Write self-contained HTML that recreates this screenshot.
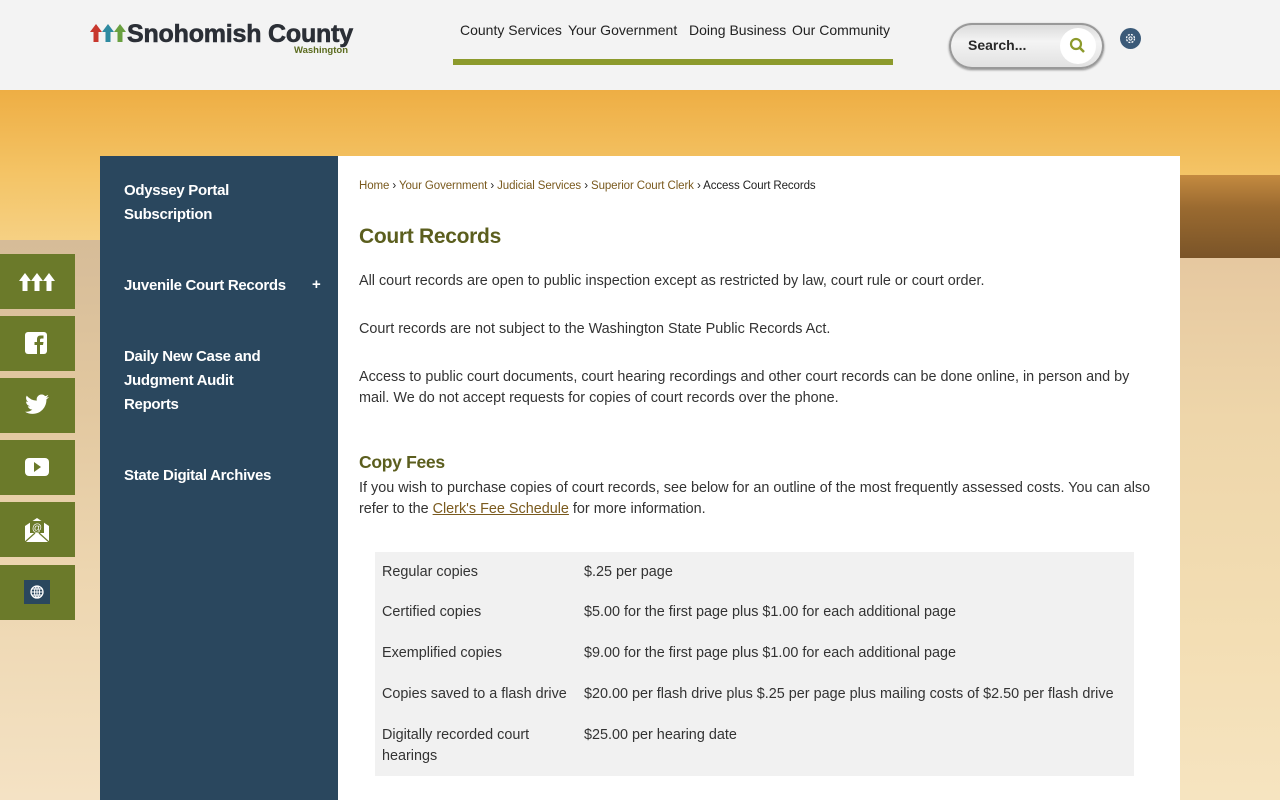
<!DOCTYPE html>
<html><head><meta charset="utf-8"><style>
*{margin:0;padding:0;box-sizing:border-box}
body{width:1280px;height:800px;overflow:hidden;font-family:"Liberation Sans",sans-serif;position:relative;
background:linear-gradient(180deg,#f0b850 90px,#f5c872 200px,#f3d59c 260px,#f1dcb0 400px,#f4e2c0 600px,#f6e6ca 800px)}
.bgtop{position:absolute;left:0;top:90px;width:1280px;height:170px;background:linear-gradient(180deg,#eeae44,#f4c466 50%,#f6d48c)}
.trees{position:absolute;left:1180px;top:175px;width:100px;height:83px;background:linear-gradient(180deg,#c48a40,#9a6a30 40%,#7a5428)}
.water{position:absolute;left:1180px;top:258px;width:100px;height:542px;background:linear-gradient(180deg,#e6c8a0,#eed6aa 30%,#f3deb4 70%,#f6e4c0)}
.lw{position:absolute;left:0;top:240px;width:100px;height:560px;background:linear-gradient(180deg,#d6bc98,#e2c8a0 30%,#edd6b0 60%,#f4e2c4)}
header{position:absolute;left:0;top:0;width:1280px;height:90px;background:#f3f3f3}
.logo{position:absolute;left:90px;top:20px}
.logo .n{font-weight:bold;font-size:25px;color:#2b2f36;letter-spacing:-0.2px;position:absolute;left:37px;top:0;white-space:nowrap;-webkit-text-stroke:0.6px #2b2f36}
.logo .w{position:absolute;left:204px;top:25px;font-size:9.5px;font-weight:bold;color:#5b6b1e}
nav{position:absolute;left:453px;top:22px;width:440px;font-size:14px;color:#222}
nav span{position:absolute;top:0;white-space:nowrap}
.navbar{position:absolute;left:453px;top:59px;width:440px;height:6px;background:#8c9a2c}
.search{position:absolute;left:949px;top:23px;width:155px;height:46px;border-radius:23px;background:linear-gradient(180deg,#d8d8d8,#f4f4f4 40%,#e0e0e0);box-shadow:0 0 0 2px #999 inset,0 1px 2px #888}
.search span{position:absolute;left:19px;top:14px;font-size:14px;font-weight:bold;color:#2a2a2a}
.search .b{position:absolute;left:111px;top:5px;width:36px;height:36px;border-radius:50%;background:#fff}
.gear{position:absolute;left:1120px;top:28px;width:21px;height:21px;border-radius:50%;background:#3b5a78}
.side{position:absolute;left:100px;top:156px;width:238px;height:644px;background:#2a475e}
.side div{position:absolute;left:24px;color:#fff;font-weight:bold;font-size:15px;line-height:24px;letter-spacing:-0.3px}
.main{position:absolute;left:338px;top:156px;width:842px;height:644px;background:#fff}
.bc{position:absolute;left:21px;top:24px;font-size:11.5px;color:#222;letter-spacing:-0.1px}
.bc a{color:#7a5a1e;text-decoration:none}
h1{position:absolute;left:21px;top:69px;font-size:21px;color:#5b5e1e;font-weight:bold;letter-spacing:-0.3px}
h2{position:absolute;left:21px;top:296px;font-size:17.5px;color:#5b5e1e;font-weight:bold;letter-spacing:-0.3px}
p{position:absolute;left:21px;width:800px;font-size:14.4px;line-height:21px;color:#333}
p a{color:#7a5a1e;text-decoration:underline}
table{position:absolute;left:37px;top:396px;width:759px;background:#f1f1f1;border-collapse:collapse;font-size:14.4px;color:#333}
td{vertical-align:top;padding:0 7px;line-height:21px}
.soc{position:absolute;left:0;width:75px;height:55px;background:#6b7a2a}
.soc svg{position:absolute;left:24px;top:15px}
</style></head><body>
<div class="bgtop"></div><div class="trees"></div><div class="water"></div><div class="lw"></div>
<header>
<div class="logo">
<svg width="36" height="22" viewBox="0 0 36 22" style="position:absolute;left:0;top:2px">
<path d="M6 2 L12 10 H8.5 V20 H3.5 V10 H0 Z" fill="#c8372d"/><path d="M18 2 L24 10 H20.5 V20 H15.5 V10 H12 Z" fill="#2e8aa0"/><path d="M30 2 L36 10 H32.5 V20 H27.5 V10 H24 Z" fill="#6aa040"/></svg>
<span class="n">Snohomish County</span><span class="w">Washington</span></div>
<nav><span style="left:7px">County Services</span><span style="left:115px">Your Government</span><span style="left:236px">Doing Business</span><span style="left:339px">Our Community</span></nav>
<div class="navbar"></div>
<div class="search"><span>Search...</span><div class="b"><svg width="36" height="36"><circle cx="16" cy="16" r="5" fill="none" stroke="#8c9a2c" stroke-width="2.2"/><path d="M20 20 L24 24" stroke="#8c9a2c" stroke-width="2.5"/></svg></div></div>
<div class="gear"><svg width="21" height="21"><circle cx="10.5" cy="10.5" r="4" fill="none" stroke="#fff" stroke-width="1.3" stroke-dasharray="2 1.2"/><circle cx="10.5" cy="10.5" r="1.6" fill="none" stroke="#fff" stroke-width="1"/></svg></div>
</header>
<div class="soc" style="top:254px"><svg width="38" height="22" viewBox="0 0 36 22" style="left:18px;top:17px"><path d="M6 2 L12 10 H8.5 V20 H3.5 V10 H0 Z M18 2 L24 10 H20.5 V20 H15.5 V10 H12 Z M30 2 L36 10 H32.5 V20 H27.5 V10 H24 Z" fill="#fff"/></svg></div>
<div class="soc" style="top:316px"><svg width="24" height="24"><rect x="1" y="1" width="22" height="22" rx="3" fill="#fff"/><path d="M16 23 V14 H19 L19.5 11 H16 V9 C16 8 16.5 7.5 17.5 7.5 H19.5 V4.5 H16.5 C14 4.5 13 6 13 8.5 V11 H10.5 V14 H13 V23 Z" fill="#6b7a2a"/></svg></div>
<div class="soc" style="top:378px"><svg width="26" height="24" viewBox="0 0 24 20"><path d="M23 2.5c-.8.4-1.7.6-2.6.7.9-.6 1.6-1.4 2-2.5-.9.5-1.9.9-2.9 1.1A4.5 4.5 0 0 0 11.8 6 12.8 12.8 0 0 1 2.5 1.3a4.5 4.5 0 0 0 1.4 6c-.7 0-1.4-.2-2-.6 0 2.2 1.5 4 3.6 4.4-.7.2-1.4.2-2 .1.6 1.8 2.2 3.1 4.2 3.1A9 9 0 0 1 1 16.2 12.8 12.8 0 0 0 7.9 18.2c8.3 0 12.8-6.9 12.8-12.8v-.6c.9-.6 1.7-1.4 2.3-2.3z" fill="#fff"/></svg></div>
<div class="soc" style="top:440px"><svg width="26" height="24"><rect x="1" y="3" width="24" height="18" rx="4" fill="#fff"/><path d="M10 7 L17 12 L10 17 Z" fill="#6b7a2a"/></svg></div>
<div class="soc" style="top:502px"><svg width="26" height="26"><rect x="1" y="9" width="24" height="16" fill="#fff"/><path d="M1 9 L13 1 L25 9 Z" fill="#fff"/><rect x="6" y="4" width="14" height="12" fill="#6b7a2a"/><text x="13" y="14" font-size="10" fill="#fff" text-anchor="middle" font-family="Liberation Sans">@</text><path d="M1 25 L11 16 M25 25 L15 16" stroke="#6b7a2a" stroke-width="1.2"/></svg></div>
<div class="soc" style="top:565px"><svg width="26" height="26" style="left:24px;top:15px"><rect width="26" height="24" fill="#2a475e"/><circle cx="13" cy="12" r="6" fill="none" stroke="#fff" stroke-width="1.3"/><path d="M7 12 H19 M13 6 V18 M8 9 H18 M8 15 H18" stroke="#fff" stroke-width="1"/><ellipse cx="13" cy="12" rx="2.5" ry="6" fill="none" stroke="#fff" stroke-width="1"/></svg></div>
<div class="side">
<div style="top:23px">Odyssey Portal<br>Subscription</div>
<div style="top:118px">Juvenile Court Records</div>
<div style="top:117px;left:212px">+</div>
<div style="top:189px">Daily New Case and<br>Judgment Audit<br>Reports</div>
<div style="top:308px">State Digital Archives</div>
</div>
<div class="main">
<div class="bc"><a>Home</a> › <a>Your Government</a> › <a>Judicial Services</a> › <a>Superior Court Clerk</a> › Access Court Records</div>
<h1>Court Records</h1>
<p style="top:115px">All court records are open to public inspection except as restricted by law, court rule or court order.</p>
<p style="top:163px">Court records are not subject to the Washington State Public Records Act.</p>
<p style="top:211px">Access to public court documents, court hearing recordings and other court records can be done online, in person and by mail. We do not accept requests for copies of court records over the phone.</p>
<h2>Copy Fees</h2>
<p style="top:322px">If you wish to purchase copies of court records, see below for an outline of the most frequently assessed costs. You can also refer to the <a>Clerk's Fee Schedule</a> for more information.</p>
<table>
<tr><td style="padding-top:10px;width:202px">Regular copies</td><td style="padding-top:10px">$.25 per page</td></tr>
<tr><td style="padding-top:19px">Certified copies</td><td style="padding-top:19px">$5.00 for the first page plus $1.00 for each additional page</td></tr>
<tr><td style="padding-top:20px">Exemplified copies</td><td style="padding-top:20px">$9.00 for the first page plus $1.00 for each additional page</td></tr>
<tr><td style="padding-top:20px">Copies saved to a flash drive</td><td style="padding-top:20px">$20.00 per flash drive plus $.25 per page plus mailing costs of $2.50 per flash drive</td></tr>
<tr><td style="padding-top:20px;padding-bottom:9px">Digitally recorded court hearings</td><td style="padding-top:20px">$25.00 per hearing date</td></tr>
</table>
</div>
</body></html>
